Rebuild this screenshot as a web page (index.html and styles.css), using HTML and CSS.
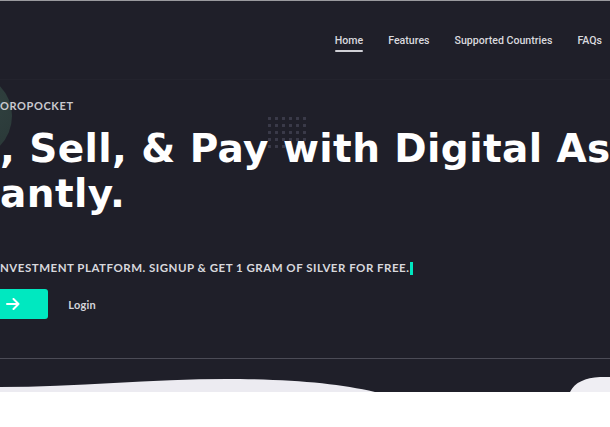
FILE: index.html
```html
<!DOCTYPE html>
<html>
<head>
<meta charset="utf-8">
<link rel="stylesheet" href="styles.css">
</head>
<body>
<section class="hero">
  <div class="blob"></div>
  <div class="dots"></div>
  <nav class="nav">
    <a class="nav-link active">Home</a>
    <a class="nav-link">Features</a>
    <a class="nav-link">Supported Countries</a>
    <a class="nav-link">FAQs</a>
  </nav>
  <div class="content">
    <p class="eyebrow">OROPOCKET</p>
    <h1 class="title">, Sell, &amp; Pay with Digital Assets<br>antly.</h1>
    <p class="subtitle">NVESTMENT PLATFORM. SIGNUP &amp; GET 1 GRAM OF SILVER FOR FREE.<span class="cursor"></span></p>
    <div class="actions">
      <a class="btn">Signup
        <svg class="arrow" viewBox="0 0 14 12" width="14" height="12"><path d="M1 6H12.5M7.5 1L12.5 6L7.5 11" fill="none" stroke="#fff" stroke-width="2" stroke-linecap="round" stroke-linejoin="round"/></svg>
      </a>
      <a class="login">Login</a>
    </div>
  </div>
  <div class="rule"></div>
  <svg class="wave" viewBox="0 0 610 20" preserveAspectRatio="none" width="610" height="20">
    <path d="M0 15 C80 15 160 6 240 7 C300 8 340 12 375 20 L0 20 Z" fill="#ecebf1"/>
    <path d="M570 20 C575 10 585 6 600 5 L610 5 L610 20 Z" fill="#efeef3"/>
  </svg>
</section>
</body>
</html>
```

FILE: styles.css
```css
* { box-sizing: border-box; }
html, body { margin: 0; padding: 0; }
body { background: #ffffff; font-family: "Lato", "Open Sans", sans-serif; }

.hero {
  position: relative;
  height: 392px;
  background: #1f1f29;
  border-top: 1px solid #9a9a9e;
  overflow: hidden;
}

.blob {
  position: absolute;
  left: -74px;
  top: 72px;
  width: 86px;
  height: 86px;
  border-radius: 50%;
  background: radial-gradient(circle at 70% 40%, #30413f, #263233);
}

.dots {
  position: absolute;
  left: 266px;
  top: 114px;
  width: 42px;
  height: 35px;
  background-image: radial-gradient(circle, #3a3a49 1.4px, transparent 1.8px);
  background-size: 7px 7px;
}

.nav {
  position: relative;
  height: 79px;
  display: flex;
  justify-content: flex-end;
  align-items: center;
  gap: 25px;
  padding-right: 8px;
  border-bottom: 1px solid #23232d;
  font-family: "Roboto", sans-serif;
}

.nav-link {
  position: relative;
  font-size: 10.6px;
  font-weight: 500;
  color: #d9d9de;
}

.nav-link.active::after {
  content: "";
  position: absolute;
  left: 0;
  right: 0;
  bottom: -5px;
  height: 2px;
  border-radius: 1px;
  background: #d0d0d6;
}

.content {
  position: relative;
  padding-top: 19px;
}

.eyebrow {
  margin: 0;
  font-size: 11px;
  line-height: 14px;
  font-weight: 700;
  letter-spacing: 0.6px;
  color: #c9c9cf;
}

.title {
  margin: 13px 0 0;
  font-family: "DejaVu Sans", "Open Sans", sans-serif;
  font-size: 39px;
  line-height: 45px;
  font-weight: 700;
  letter-spacing: 0.4px;
  color: #ffffff;
  white-space: nowrap;
}

.subtitle {
  margin: 45px 0 0;
  font-size: 11.5px;
  line-height: 14px;
  font-weight: 700;
  letter-spacing: 0.5px;
  color: #d8d8dd;
  white-space: nowrap;
  display: flex;
  align-items: center;
}

.cursor {
  display: inline-block;
  width: 3px;
  height: 13px;
  margin-left: 1px;
  background: #00e6bf;
}

.actions {
  margin-top: 14px;
  display: flex;
  align-items: center;
  gap: 20px;
}

.btn {
  display: flex;
  align-items: center;
  gap: 8px;
  height: 30px;
  margin-left: -38px;
  padding: 0 28px 0 0;
  background: #00e8c0;
  border-radius: 3px;
  color: #ffffff;
  font-size: 12px;
  font-weight: 700;
}

.login {
  font-size: 11px;
  font-weight: 700;
  color: #d5d5da;
  letter-spacing: 0.2px;
}

.rule {
  position: absolute;
  left: 0;
  right: 0;
  top: 357px;
  height: 1px;
  background: #4b4b56;
}

.wave {
  position: absolute;
  left: 0;
  bottom: 0;
  display: block;
}
```
